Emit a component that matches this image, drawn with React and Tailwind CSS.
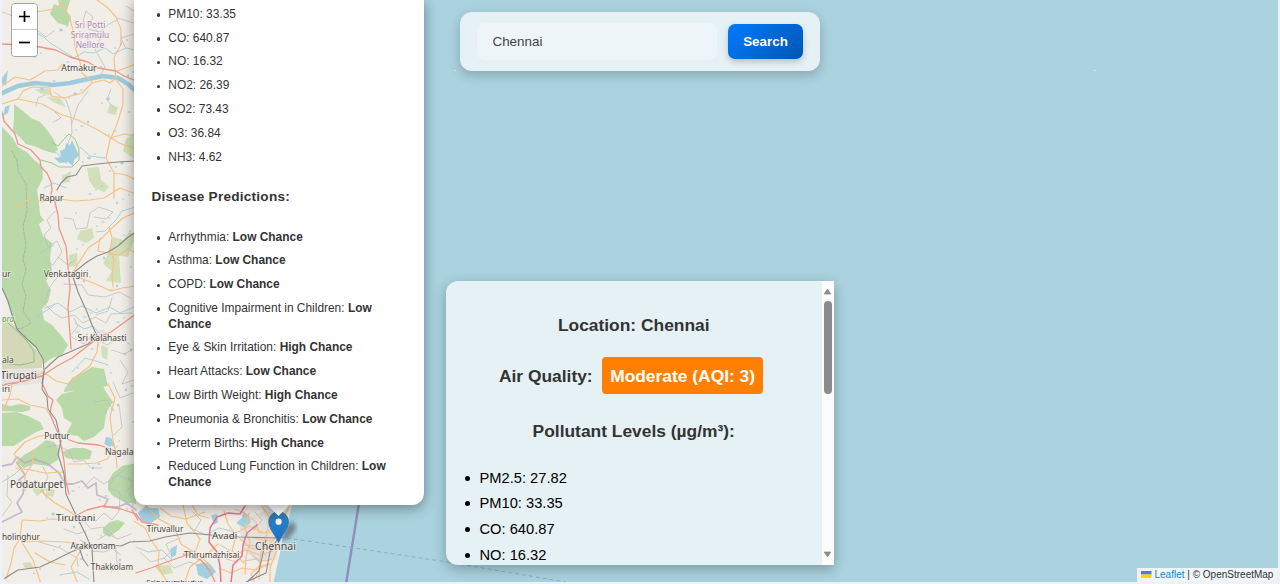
import React from "react";

const land = "M0 0H290V505H292C290 514 287 526 283 537C280 552 277 568 273 584H0Z";

const forests = [
  "M14 104L24 112L31 118L40 122L47 130L54 140L58 150L53 153L43 150L34 146L26 144L20 137L13 131L14 118Z",
  "M2 127L12 137L18 147L28 153L34 160L42 166L43 178L37 190L39 204L40 215L44 220L39 224L43 236L52 243L50 258L52 270L46 281L51 290L48 302L42 309L44 320L52 325L60 334L68 345L62 355L52 358L44 364L40 352L28 340L17 328L11 312L2 288Z",
  "M74 391L78 384L102 384L106 392L113 402L106 413L104 428L94 437L84 441L78 436L66 434L72 423L64 418L62 408L56 400L62 394Z",
  "M64 390L72 378L84 372L92 367L104 369L108 386L64 392Z",
  "M2 413L16 412L28 416L40 422L44 429L36 432L26 438L14 446L2 446Z",
  "M16 462L24 455L36 448L46 440L54 442L60 450L58 460L48 466L34 464L24 468Z",
  "M62 452L72 448L84 448L92 451L90 459L78 460L66 458Z",
  "M108 482L113 473L122 466L136 463L136 504L124 502L113 496L108 490Z",
  "M2 404L10 406L20 404L30 406L30 410L22 412L2 411Z",
  "M54 4L64 8L71 17L68 26L58 23L50 14Z",
  "M103 528L110 522L118 520L125 523L119 530L109 537L103 533Z",
  "M58 0H70L67 11L60 9Z",
];

const scrub = [
  "M34 89L50 89L52 95L42 94ZM46 97L60 98L66 107L55 103Z",
  "M110 104L118 107L116 115L107 113Z",
  "M126 139L136 131V160L123 151Z",
  "M87 168L99 167L101 180L109 187L104 192L94 188L89 180ZM62 176L71 171L70 182L63 183Z",
  "M80 231L92 228L94 238L86 243L77 239ZM113 237L124 240L129 232L136 235L128 257L119 256L121 283L106 281L112 271L103 264L108 253Z",
  "M69 255L77 253L78 266L69 267Z",
  "M101 345L108 348L107 360L102 357Z",
  "M32 489L43 483L46 490L37 496ZM46 488L55 490L53 497L46 495Z",
  "M22 563L31 562L34 569L25 568Z",
  "M154 566L170 565L173 573L162 575Z",
  "M210 498L220 494L226 500L215 506Z",
];

const lakes = [
  "M66 143L70 145L72 140L77 151L79 155L74 160L73 166L68 162L60 163L54 158L61 157L60 151L65 149Z",
  "M106 437L111 438L114 443L110 447L104 444Z",
  "M138 513L146 505L150 508L158 508L160 517L151 523L142 521Z",
  "M196 565L204 562L211 565L216 572L207 579L198 575Z",
  "M236 523L242 518L243 511L248 515L251 522L245 528Z",
  "M211 515L217 514L218 522L214 525Z",
  "M2 78L8 70L6 85L2 84Z",
  "M170 549L177 545L176 555L171 558Z",
  "M5 107L10 105L8 113L3 116Z",
];

const streams = [
  "M36 33L44 37L50 43L57 47L66 53L74 58L84 52L94 53L105 48L113 54L126 48L136 50",
  "M2 482L15 474L24 465",
  "M46 150L57 153L67 164M44 188L54 183L66 188M80 147L90 156L105 158",
  "M136 207L122 211L116 220L105 231L96 232",
  "M58 257L68 265L75 260M45 308L58 303L70 312L82 306L96 313L110 307L120 313L136 306",
  "M75 323L84 329L93 326L99 333M72 372L85 358L96 361L108 365",
  "M136 547L148 552L162 550L172 560M190 528L206 535L219 528L235 532",
  "M40 253L54 245M36 317L52 307M80 540L97 550L110 547L121 555M60 575L77 572L89 579",
];

const yellowRoads = [
  "M2 86L15 77L30 80L45 71L58 70L62 64",
  "M2 104L18 99L42 104L60 114L78 120L98 130L119 143L136 149",
  "M18 99L23 91L32 87L50 88L51 96L64 98L82 93L92 83L104 80L110 83L116 78",
  "M37 12L54 9L63 4L70 19L74 34L75 47L80 62L82 73L92 82",
  "M97 0L108 8L116 17L121 29L121 44L114 58L116 80L123 89L123 104L117 124L110 140L106 158L114 173L126 175L136 180",
  "M117 71L123 69L136 64M110 138L124 134L136 136",
  "M114 173V198M136 194L120 188L104 198L90 200L75 201L59 199L40 202",
  "M15 208L31 198L41 201",
  "M136 212L123 218L112 228L100 240L88 248L78 264L72 274",
  "M71 275L83 279L98 285L111 291L122 288L136 286",
  "M109 227L112 238L110 251L114 260L112 276L113 287M100 238L98 251L119 255L128 249L136 253",
  "M46 374L56 381L68 384L78 375L90 366L97 352L98 342",
  "M12 384L10 395L3 411M12 384L28 380L44 372",
  "M2 400L18 399L30 405L45 408L51 416",
  "M108 384L115 398L110 417L113 440L116 455L117 468",
  "M59 437L50 435L39 436L25 442L14 454L21 464",
  "M68 464L82 464L96 463L107 459L117 446",
  "M16 468L31 470L45 473L65 472",
  "M41 491L55 503L69 511L78 518",
  "M22 520L40 521L53 519L72 521",
  "M22 521L20 539L14 548L11 563L6 579M21 541L33 560L41 584M22 542L42 541L65 542L80 544",
  "M78 584L71 567L81 550L84 541",
  "M35 553L50 562L65 565",
  "M25 491L25 475L33 463L32 451",
  "M134 521L145 528L151 540L159 551L158 566L168 584",
  "M146 505L157 518L174 527L181 544L200 556L210 565",
  "M183 505L187 523L200 539L196 550L185 554",
  "M184 584L190 567L211 551L218 544",
  "M235 509L246 514L256 522L259 533L272 532",
  "M238 532L249 526L264 533L274 528",
  "M240 539L252 549L267 548L276 536",
  "M234 555L246 550L260 555L273 551",
  "M249 513L245 529L250 542L246 557L245 574",
  "M262 506L269 517L267 533L261 552L259 579",
  "M289 506L281 526L278 546L270 568L270 583",
  "M255 583L251 574L259 566L270 564",
  "M219 568L231 573L242 568L256 570L270 564",
  "M224 511L228 524L236 535L232 551L244 563",
  "M192 505L198 515L209 518M160 508L171 516L186 519L205 512",
  "M252 537L264 541L274 540M254 559L266 561L272 559M268 519L276 525",
];

const redRoads = [
  "M2 44L20 45L40 47L56 50L70 57L88 62L98 68L116 71L124 76L136 81",
  "M2 112L4 121L15 134L18 144L31 150L40 160L41 167L47 173L51 182L52 190L51 194",
  "M54 198L58 215L59 228L66 246L68 267L70 288L68 308L70 334L71 349",
  "M2 385L20 382L42 376L57 366L72 358L85 348L99 337L111 332L122 324L136 314",
  "M43 385L48 396L53 400L51 407L50 414L57 431L64 438L78 443L99 445L116 451",
  "M59 437L62 450L64 461L66 482L69 494",
  "M75 516L87 510L103 506L121 509L136 514L142 522L158 525",
  "M132 510L138 520M183 554L201 560L210 571L216 584",
  "M136 573L151 568L164 563L181 557L188 554",
];

const railways = [
  "M2 288L8 301L12 315L17 329L27 339L36 347L43 359L44 371L42 384",
  "M136 232L127 238L118 246L108 252L97 256L87 262L72 274L78 292L87 312L92 325L97 336L88 344L72 351L58 357L45 369",
  "M44 371L42 389L47 397L48 409L56 420L61 441L58 454L64 474L66 494L75 513L85 533L92 549L94 584",
  "M2 580L18 570L40 567L55 560L71 552L86 546L102 544L121 546L130 542L150 541L165 537L190 533L211 535L239 537L276 538",
  "M79 547L83 559L88 566",
  "M136 161L118 162L97 164L82 166L76 175L67 177L61 183L57 190",
  "M278 538L270 552L266 573L244 583M266 540L263 553L259 571L248 581",
];

const boundaries = [
  "M2 466L12 464L17 457L25 463L34 459L48 464L59 473L65 484L73 484L82 481L88 488L96 483L97 495L108 499L104 507L118 507L127 503L136 510",
  "M17 463L25 475L19 480L24 485L23 494L17 503L22 512L14 516L2 522",
];

const localRoads = [
  "M2 12L18 18L32 9M31 26L46 37L54 31M83 21L86 11L93 17L88 29L100 32L109 24L117 20",
  "M36 106L38 98L45 95M54 92L66 100L71 115L72 133L66 148M72 123L78 105L88 91M55 112L61 118L53 122",
  "M126 6L136 12M97 53L105 67L98 79M134 34L121 38L125 47",
  "M94 27L101 36L95 51M117 18L134 23M111 89L107 100L115 109",
  "M55 211L47 220L51 228L44 235L48 247L57 241L62 252L53 265L47 261",
  "M64 218L73 219L76 229L87 228L90 213L99 207L113 212L106 219L94 217",
  "M58 276L50 287L44 303L54 313L62 318L74 315L83 323L95 317L106 323L111 314L132 313",
  "M64 284L82 285L88 295L105 297L119 292L131 298M112 298L108 311L96 315",
  "M74 318L78 326L70 336L84 344L91 336L107 345L121 337L130 345",
  "M8 475L7 496L12 502L2 516M43 467L48 477L42 489L47 499",
  "M48 447L57 445L69 451L74 462L84 460L91 468L102 468",
  "M68 520L82 517L96 521L104 513L112 520L119 511L120 497",
  "M92 551L104 552L116 547L117 564L111 572M83 520L91 529L103 527L114 536",
  "M39 542L60 548L77 558L78 566M84 487L94 477L104 484L117 475L136 482",
  "M94 402L107 400L114 411M113 382L120 398L133 393M119 405L122 427L114 435",
  "M124 470L113 479L109 488L118 491L126 503M128 476L133 486L126 491",
  "M140 552L151 562L164 558L174 568L189 562L201 566",
  "M163 559L170 553L166 544L180 538M193 512L201 520L195 530",
  "M220 545L229 550L226 559L237 562M244 561L257 559L262 567",
  "M120 360L128 372L122 384L134 380M112 350L124 354L136 348",
  "M98 540L107 534L118 539L131 534M64 529L77 534L86 531",
  "M244 545L258 546L266 556M255 512L262 520L254 530M250 553L261 562L256 577",
];

const pinkRoads = [
  "M245 506L240 514L228 513L217 517L210 528L209 542L217 552L220 566L221 584",
  "M257 525L247 533L243 545L242 556L233 565L231 583",
];

const ponds = Array.from({ length: 170 }, (_, i) => [
  28 + ((i * 41) % 107),
  25 + ((i * 73) % 552),
]).filter(([x, y]) => x > 72 || y < 100 || y > 500);

const labels = [
  [79, 70.7, "Atmakur", 8.7, "middle"],
  [51.5, 200.5, "Rapur", 8.5, "middle"],
  [66, 276.5, "Venkatagiri", 8.4, "middle"],
  [102, 341, "Sri Kalahasti", 8.5, "middle"],
  [0.5, 379, "Tirupati", 10, "start"],
  [2, 363, "ala", 8.5, "start"],
  [2, 277, "ur", 8.5, "start"],
  [2, 392, "iri", 8.5, "start"],
  [57, 438.5, "Puttur", 8.5, "middle"],
  [105, 454.5, "Nagalapuram", 8.6, "start"],
  [36.5, 487.8, "Podaturpet", 10, "middle"],
  [75.7, 520.5, "Tiruttani", 9.8, "middle"],
  [2, 539.5, "holinghur", 8.2, "start"],
  [93, 549, "Arakkonam", 8.4, "middle"],
  [112, 570, "Thakkolam", 8.2, "middle"],
  [165, 531.5, "Tiruvallur", 8.2, "middle"],
  [224.7, 538.8, "Avadi", 9.8, "middle"],
  [211.7, 558, "Thirumazhisai", 8.4, "middle"],
  [275.5, 550, "Chennai", 10.6, "middle"],
  [174.5, 585, "Sriperumbudur", 7.8, "middle"],
];

function Strokes({ paths, color, width, opacity = 1, dash }) {
  return (
    <g fill="none" stroke={color} strokeWidth={width} opacity={opacity} strokeDasharray={dash} strokeLinejoin="round" strokeLinecap="round">
      {paths.map((d) => <path key={d} d={d} />)}
    </g>
  );
}

function MapTiles() {
  return (
    <svg className="absolute -left-[2px] top-0 h-[584px] w-[1280px]" viewBox="0 0 1280 584">
      <path d={land} fill="#f1eee8" />
      <g fill="#dfdddb">
        <path d="M239 524L252 516L265 511L278 515L287 520L281 538L276 560L258 562L244 550Z" opacity=".8" />
        <path d="M2 367L20 365L46 372L42 383L2 387ZM92 332L104 329L108 339L96 343Z" opacity=".7" />
      </g>
      <g fill="#d3dfb9">{scrub.map((d) => <path key={d} d={d} />)}</g>
      <path d="M2 316L15 326L30 343L42 356V368L2 369Z" fill="#d5d8b6" />
      <g fill="#b9d9a9">{forests.map((d) => <path key={d} d={d} />)}</g>
      <path d="M2 318L17 331L27 341L34 352L34 362L20 365L2 363" fill="none" stroke="#8cc47e" />
      <g fill="#a3cfe0">{lakes.map((d) => <path key={d} d={d} />)}</g>
      <g fill="#acd1df">{ponds.map(([x, y], i) => <ellipse key={i} cx={x} cy={y} rx={i % 3 ? 1.1 : 1.9} ry={i % 4 ? 0.8 : 1.4} />)}</g>
      <path d="M51 142L58 146L64 139L69 134L75 139L79 149L79 160L72 167L59 167L52 163L41 160" fill="none" stroke="#98ca92" />
      <path d="M0 94L18 86L35 83L53 85L70 83L88 79L103 76L118 78L128 84L137 92" fill="none" stroke="#9fcbdc" strokeWidth="4.6" />
      <Strokes paths={streams} color="#a2cddd" width={0.9} />
      <Strokes paths={localRoads} color="#bbb8bc" width={0.7} />
      <Strokes paths={["M12 151L17 161L18 171L26 184L27 211L23 226L26 245L23 260L26 270L22 284L26 296L23 311L31 323L23 328L16 329"]} color="#a3b69c" width={0.9} dash="3 1.5" />
      <Strokes paths={boundaries} color="#b7a6bd" width={1.8} opacity={0.7} />
      <Strokes paths={yellowRoads} color="#f6c285" width={1.2} />
      <Strokes paths={redRoads} color="#ee9588" width={1.3} />
      <Strokes paths={pinkRoads} color="#e4768f" width={1.5} />
      <Strokes paths={railways} color="#8e8b89" width={1.1} />
      <path d="M359 503L346 584" stroke="#8a83b5" strokeWidth="2.4" opacity=".85" />
      <path d="M280 537L308 541L447 562L566 582" fill="none" stroke="#86acd3" strokeWidth="1" strokeDasharray="4 3" />
      <path d="M454 70.5h2M455 69.5v2M1094 70.5h2" stroke="#d7e9ee" strokeWidth=".7" />
      <g className="font-['Noto_Sans',sans-serif]" fill="#4b4846" stroke="#f4f1ec" strokeWidth="2" strokeOpacity=".65" paintOrder="stroke" strokeLinejoin="round">
        {labels.map(([x, y, text, size, anchor]) => (
          <text key={text} x={x} y={y} fontSize={size} textAnchor={anchor}>{text}</text>
        ))}
        <g fill="#ad89b5" fontSize="8.4" textAnchor="middle">
          <text x="90" y="28">Sri Potti</text>
          <text x="90" y="38">Sriramulu</text>
          <text x="90" y="48">Nellore</text>
        </g>
        <text x="2" y="322" fontSize="8" fontStyle="italic" fill="#59a251">ora</text>
      </g>
      <defs>
        <linearGradient id="pin" x1="0" y1="0" x2="0" y2="1">
          <stop stopColor="#3688ca" /><stop offset="1" stopColor="#126fc6" />
        </linearGradient>
        <filter id="soft"><feGaussianBlur stdDeviation="2" /></filter>
      </defs>
      <path d="M280 542L286 526L294 521L296 529L289 538Z" fill="#334" opacity=".5" filter="url(#soft)" />
      <path d="M278.5 542.5C275 534.5 268.8 529 268.8 521.5A9.8 9.8 0 0 1 288.4 521.5C288.4 529 282 534.5 278.5 542.5Z" fill="url(#pin)" stroke="#2b73ae" strokeWidth=".8" />
      <circle cx="278.6" cy="521.7" r="3.1" fill="#fff" />
    </svg>
  );
}

const pollutants = ["PM2.5: 27.82", "PM10: 33.35", "CO: 640.87", "NO: 16.32", "NO2: 26.39", "SO2: 73.43", "O3: 36.84", "NH3: 4.62"];

const diseases = [
  ["Arrhythmia", "Low"],
  ["Asthma", "Low"],
  ["COPD", "Low"],
  ["Cognitive Impairment in Children", "Low"],
  ["Eye & Skin Irritation", "High"],
  ["Heart Attacks", "Low"],
  ["Low Birth Weight", "High"],
  ["Pneumonia & Bronchitis", "Low"],
  ["Preterm Births", "High"],
  ["Reduced Lung Function in Children", "Low"],
];

function Bullet({ children }) {
  return (
    <li className="relative">
      <span className="absolute -left-[11.5px] top-[6.4px] size-[3.6px] rounded-full bg-[#333]" />
      {children}
    </li>
  );
}

function Popup() {
  return (
    <div className="absolute left-[132px] top-0 h-[505.3px] w-[289.5px]">
      <div className="absolute bottom-[-7.5px] left-[137px] size-[15px] rotate-45 bg-white shadow-[0_3px_14px_rgba(0,0,0,0.4)]" />
      <div className="relative h-full rounded-b-xl bg-white pl-[34.3px] pr-[34px] pt-[6.9px] text-[11.93px] leading-[15.6px] text-[#333] shadow-[0_3px_14px_rgba(0,0,0,0.4)]">
        <ul className="flex flex-col gap-[8.2px]">
          {pollutants.slice(1).map((p) => <Bullet key={p}>{p}</Bullet>)}
        </ul>
        <h3 className="-ml-[16.8px] mt-[22.7px] text-[13.6px] font-bold leading-[18px] tracking-[0.24px]">Disease Predictions:</h3>
        <ul className="mt-[23.8px] flex flex-col gap-[8.2px]">
          {diseases.map(([name, level]) => (
            <Bullet key={name}>{name}: <b>{level} Chance</b></Bullet>
          ))}
        </ul>
      </div>
    </div>
  );
}

function ZoomControl() {
  return (
    <div className="absolute left-[9px] top-[3px] flex w-[27px] flex-col rounded-[4px] border border-black/30 bg-clip-padding">
      <button aria-label="Zoom in" className="flex h-[26px] items-center justify-center rounded-t-[3px] border-b border-[#ccc] bg-white">
        <svg className="size-[11px]" viewBox="0 0 11 11"><path d="M0 5.5H11M5.5 0V11" stroke="#000" strokeWidth="1.7" /></svg>
      </button>
      <button aria-label="Zoom out" className="flex h-[25.5px] items-center justify-center rounded-b-[3px] bg-white">
        <svg className="size-[11px]" viewBox="0 0 11 11"><path d="M0 5.5H11" stroke="#000" strokeWidth="1.7" /></svg>
      </button>
    </div>
  );
}

function SearchBar() {
  return (
    <div className="absolute left-[458px] top-[11.5px] flex h-[59.5px] w-[359.5px] items-center gap-[11px] rounded-xl bg-[#e6f1f6] pl-[17px] shadow-[0_4px_12px_rgba(0,0,0,0.22)]">
      <input
        readOnly
        value="Chennai"
        className="h-[37px] w-[240px] rounded-lg bg-[#edf5f8] px-[15.5px] pt-px text-[13.4px] text-[#444] outline-none"
      />
      <button className="h-[35.5px] w-[75px] rounded-[7px] bg-linear-135 from-[#007bff] to-[#0056b3] pt-px text-[13.4px] font-bold text-white shadow-[0_3px_6px_rgba(0,0,0,0.2)]">
        Search
      </button>
    </div>
  );
}

function InfoPanel() {
  return (
    <div className="absolute left-[444px] top-[281.3px] flex h-[283.7px] w-[388px] overflow-hidden rounded-l-xl bg-[#e6f1f6] shadow-[0_4px_14px_rgba(0,0,0,0.28)]">
      <div className="min-w-0 flex-1 overflow-hidden">
        <div className="flex flex-col items-center text-[17.4px] font-bold leading-[22px] text-[#333]">
          <h3 className="mt-[32.4px]">Location: Chennai</h3>
          <div className="mt-[21.3px] flex h-[37.5px] items-center gap-[9.5px] pr-[5.5px]">
            <span>Air Quality:</span>
            <span className="flex h-[37.5px] items-center rounded-[4px] bg-[#ff8000] px-[8px] text-white">Moderate (AQI: 3)</span>
          </div>
          <h3 className="mt-[26px]">Pollutant Levels (µg/m³):</h3>
        </div>
        <ul className="mt-[25.3px] flex flex-col gap-[5.7px] pl-[33.5px] text-[14.7px] leading-[20px] text-black">
          {pollutants.map((p) => (
            <li key={p} className="relative">
              <span className="absolute -left-[14.3px] top-[8px] size-[5px] rounded-full bg-black" />
              {p}
            </li>
          ))}
        </ul>
      </div>
      <div className="flex w-[12.5px] flex-col items-center bg-[#fcfcfc] py-[6.5px]">
        <svg className="h-[7px] w-[9px]" viewBox="0 0 9 7"><path d="M4.5 1L7.8 6H1.2Z" fill="#8b8b8b" stroke="#8b8b8b" strokeWidth=".7" strokeLinejoin="round" /></svg>
        <div className="mt-[6px] h-[93px] w-[7.5px] rounded-full bg-[#8b8b8b]" />
        <svg className="mt-auto h-[7px] w-[9px]" viewBox="0 0 9 7"><path d="M4.5 6L7.8 1H1.2Z" fill="#8b8b8b" stroke="#8b8b8b" strokeWidth=".7" strokeLinejoin="round" /></svg>
      </div>
    </div>
  );
}

function Attribution() {
  return (
    <div className="absolute bottom-0 right-0 flex h-[14px] w-[141px] items-center gap-[3px] whitespace-nowrap bg-white/80 pl-[4px] text-[10px] text-[#333]">
      <svg className="h-[7px] w-[10.5px]" viewBox="0 0 12 8"><path fill="#4c7be1" d="M0 0h12v4H0z" /><path fill="#ffd500" d="M0 4h12v4H0z" /></svg>
      <span><span className="text-[#2187b5]">Leaflet</span> | © OpenStreetMap</span>
    </div>
  );
}

export default function App() {
  return (
    <main className="h-[584px] w-[1280px] overflow-hidden bg-[#eff1f6] px-[2px] font-['Liberation_Sans',Arial,sans-serif]">
      <div className="relative h-[581.5px] w-[1276px] overflow-hidden rounded-b-[9px] bg-[#aad3df]">
        <MapTiles />
        <Popup />
        <ZoomControl />
        <SearchBar />
        <InfoPanel />
        <Attribution />
      </div>
    </main>
  );
}
